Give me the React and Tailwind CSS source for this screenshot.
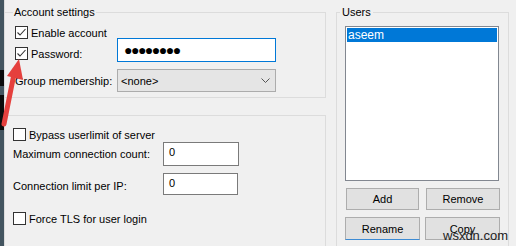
import { useState } from "react"

function Check({ checked }) {
  return (
    <span className="w-[13px] h-[13px] border border-[#333333] bg-white flex items-center justify-center shrink-0">
      {checked && (
        <svg width="11" height="11" viewBox="0 0 11 11">
          <polyline points="1.5,5.5 4,8 9.5,2" fill="none" stroke="#333333" strokeWidth="1.1" />
        </svg>
      )}
    </span>
  )
}

function Btn({ children, className = "" }) {
  return (
    <button className={`bg-[#e1e1e1] border border-[#adadad] text-[11px] text-black flex items-center justify-center ${className}`}>
      {children}
    </button>
  )
}

export default function App() {
  const [users] = useState(["aseem"])

  return (
    <div
      className="relative w-[516px] h-[246px] overflow-hidden bg-[#f0f0f0] flex text-[11px] text-black leading-[14px]"
      style={{ fontFamily: '"Liberation Sans", Arial, sans-serif' }}
    >
      {/* dark window edge */}
      <div className="w-[4px] h-full flex flex-col shrink-0">
        <div className="h-[70px] bg-[#435560]" />
        <div className="h-[16px] bg-[#0b0b0b]" />
        <div className="h-[9px] bg-[#435560]" />
        <div className="h-[35px] bg-[#0b0b0b]" />
        <div className="flex-1 bg-[#435560]" />
      </div>

      {/* left column */}
      <div className="w-[322px] flex flex-col border-l border-[#dcdcdc] shrink-0">
        <fieldset className="mt-[5px] h-[93px] border border-l-0 border-[#dcdcdc]">
          <legend className="ml-[8px] px-[1px]">Account settings</legend>
          <div className="h-[13px] mt-[7px] pl-[10px] flex items-center gap-[3px]">
            <Check checked />
            <span>Enable account</span>
          </div>
          <div className="h-[24px] mt-[-1px] pl-[10px] flex">
            <div className="w-[102px] h-[13px] mt-[9px] flex items-center gap-[3px]">
              <Check checked />
              <span>Password:</span>
            </div>
            <div className="w-[159px] h-[24px] bg-white border border-[#0078d7] flex items-center pl-[6px]">
              <span className="text-[14px] tracking-[-1.5px] leading-none">●●●●●●●●</span>
            </div>
          </div>
          <div className="h-[23px] mt-[7px] pl-[10px] flex">
            <div className="w-[102px] flex items-center">Group membership:</div>
            <div className="w-[159px] h-[23px] bg-[#e5e5e5] border border-[#acacac] flex items-center justify-between pl-[3px] pr-[5px]">
              <span>&lt;none&gt;</span>
              <svg width="9" height="6" viewBox="0 0 9 6">
                <polyline points="0.5,0.5 4.5,4.5 8.5,0.5" fill="none" stroke="#555555" strokeWidth="1" />
              </svg>
            </div>
          </div>
        </fieldset>

        <div className="mt-[17px] flex-1 border-t border-r border-[#dcdcdc] pl-[8px]">
          <div className="h-[13px] mt-[12px] flex items-center gap-[3px]">
            <Check />
            <span>Bypass userlimit of server</span>
          </div>
          <div className="h-[24px] mt-[1px] flex items-center">
            <span className="w-[150px]">Maximum connection count:</span>
            <div className="w-[76px] h-[24px] bg-white border border-[#7a7a7a] pl-[5px] pt-[2px]">0</div>
          </div>
          <div className="h-[22px] mt-[7px] flex items-center">
            <span className="w-[150px] pt-[4px]">Connection limit per IP:</span>
            <div className="w-[75px] h-[22px] bg-white border border-[#7a7a7a] pl-[5px] pt-[2px]">0</div>
          </div>
          <div className="h-[13px] mt-[17px] flex items-center gap-[3px]">
            <Check />
            <span>Force TLS for user login</span>
          </div>
        </div>
      </div>

      {/* users column */}
      <fieldset className="ml-[10px] mt-[5px] w-[173px] h-[260px] border border-[#dcdcdc] shrink-0">
        <legend className="ml-[3px] px-[2px]">Users</legend>
        <div className="ml-[8px] mt-[7px] w-[154px] h-[155px] bg-white border border-[#828790] p-[1px]">
          {users.map(u => (
            <div key={u} className="h-[14px] bg-[#0078d7] text-white text-[12px] pl-[1px] leading-[14px]">
              {u}
            </div>
          ))}
        </div>
        <div className="ml-[9px] mt-[7px] flex gap-[7px]">
          <Btn className="w-[73px] h-[22px]">Add</Btn>
          <Btn className="w-[74px] h-[22px]">Remove</Btn>
        </div>
        <div className="ml-[8px] mt-[7px] flex gap-[5px]">
          <Btn className="w-[75px] h-[23px] border-[#7a7a7a] border-b-[#3c8bd4]">Rename</Btn>
          <Btn className="w-[75px] h-[23px] border-[#6d6d6d]">Copy</Btn>
        </div>
      </fieldset>

      {/* watermark */}
      <span className="absolute left-[443px] top-[229px] text-[13px] text-[#222222]">wsxdn.com</span>

      {/* red annotation arrow */}
      <svg className="absolute left-0 top-0" width="40" height="140" viewBox="0 0 40 140">
        <line x1="4" y1="124" x2="14" y2="74" stroke="#e5403d" strokeWidth="5" strokeLinecap="round" />
        <polygon points="19,59 7,76 23,80" fill="#e5403d" />
      </svg>
    </div>
  )
}
